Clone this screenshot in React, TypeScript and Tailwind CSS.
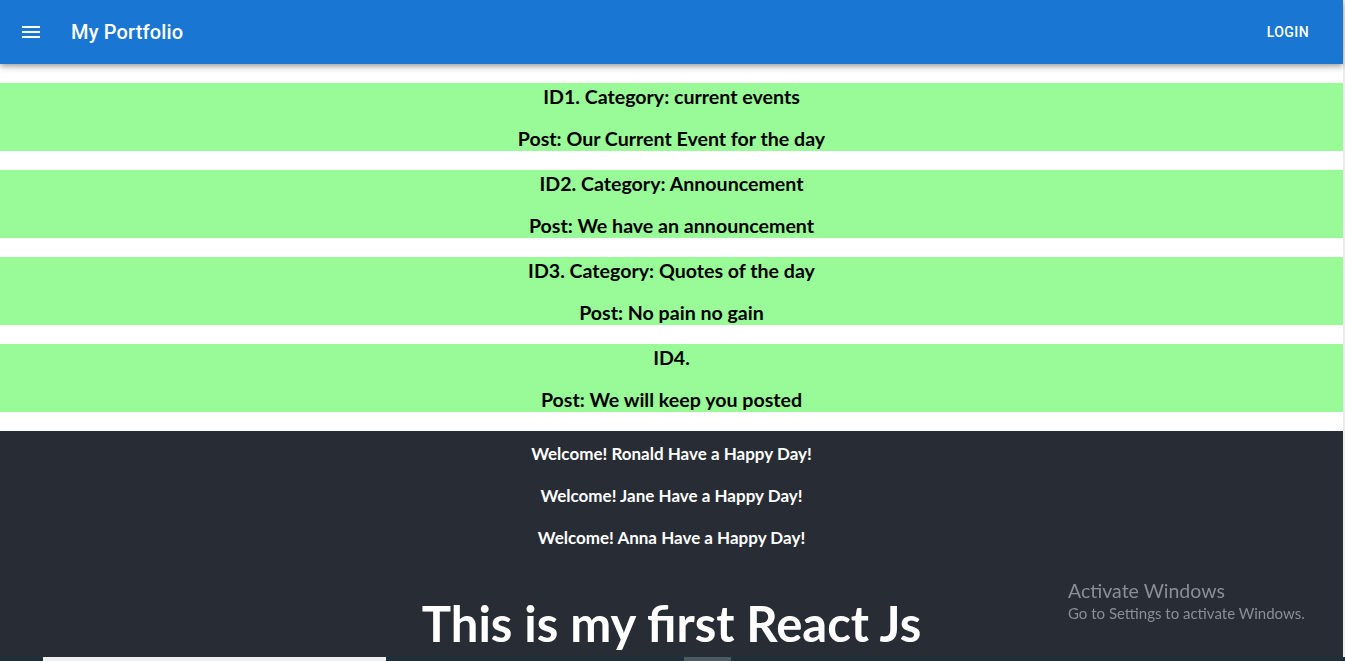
import React from 'react'

const posts = [
  { id: 1, category: 'current events', post: 'Our Current Event for the day' },
  { id: 2, category: 'Announcement', post: 'We have an announcement' },
  { id: 3, category: 'Quotes of the day', post: 'No pain no gain' },
  { id: 4, category: '', post: 'We will keep you posted' },
]

const users = ['Ronald', 'Jane', 'Anna']

const segoe = { fontFamily: '"Segoe UI", Lato, "Noto Sans", sans-serif' }

const MenuIcon = () => (
  <svg width="18" height="12" viewBox="0 0 18 12" fill="white">
    <rect x="0" y="0" width="18" height="2" />
    <rect x="0" y="5" width="18" height="2" />
    <rect x="0" y="10" width="18" height="2" />
  </svg>
)

const App = () => {
  return (
    <div className="flex h-[661px] w-full overflow-hidden bg-white" style={segoe}>
      <div className="flex min-w-0 flex-1 flex-col">
        <header className="relative z-10 flex h-16 shrink-0 items-center justify-between bg-[#1976d2] pl-[22px] pr-[24px] text-white shadow-[0_2px_4px_-1px_rgba(0,0,0,0.2),0_4px_5px_0_rgba(0,0,0,0.14),0_1px_10px_0_rgba(0,0,0,0.12)] [font-family:Roboto,sans-serif]">
          <div className="flex items-center">
            <MenuIcon />
            <span className="ml-[31px] text-[20px] font-medium tracking-[0.15px]">My Portfolio</span>
          </div>
          <span className="mr-[10px] text-sm font-medium tracking-[0.4px] uppercase">Login</span>
        </header>

        <div className="flex flex-col gap-[19px] py-[19px]">
          {posts.map((p) => (
            <div key={p.id} className="flex h-[68px] flex-col gap-[17px] bg-[#98fb98] pt-[1px] text-center text-[19.6px] font-bold text-black">
              <h3 className="leading-[25px]">
                ID{p.id}.{p.category && ` Category: ${p.category}`}
              </h3>
              <h3 className="leading-[25px]">Post: {p.post}</h3>
            </div>
          ))}
        </div>

        <div className="flex flex-1 flex-col items-center bg-[#282c34] pt-[12px] text-white">
          {users.map((u) => (
            <h4 key={u} className="mb-[21px] text-[17px] leading-[21px] font-bold">
              Welcome! {u} Have a Happy Day!
            </h4>
          ))}
          <h1 className="mt-[22px] text-[49px] leading-[64px] font-bold">This is my first React Js</h1>
        </div>
      </div>
      <div className="w-[2px] shrink-0 bg-[#ececec]" />

      <div className="pointer-events-none fixed left-[1068px] top-[579px] text-[#8b8e94]">
        <div className="text-[19.5px] leading-[24px]">Activate Windows</div>
        <div className="text-[15px] leading-[20px]">Go to Settings to activate Windows.</div>
      </div>

      <div className="fixed bottom-0 left-0 flex h-[4px] w-full bg-[#1d3039]">
        <div className="ml-[43px] w-[343px] bg-[#eef0f2]" />
        <div className="ml-[298px] w-[47px] bg-[#4a5a63]" />
      </div>
    </div>
  )
}

export default App
